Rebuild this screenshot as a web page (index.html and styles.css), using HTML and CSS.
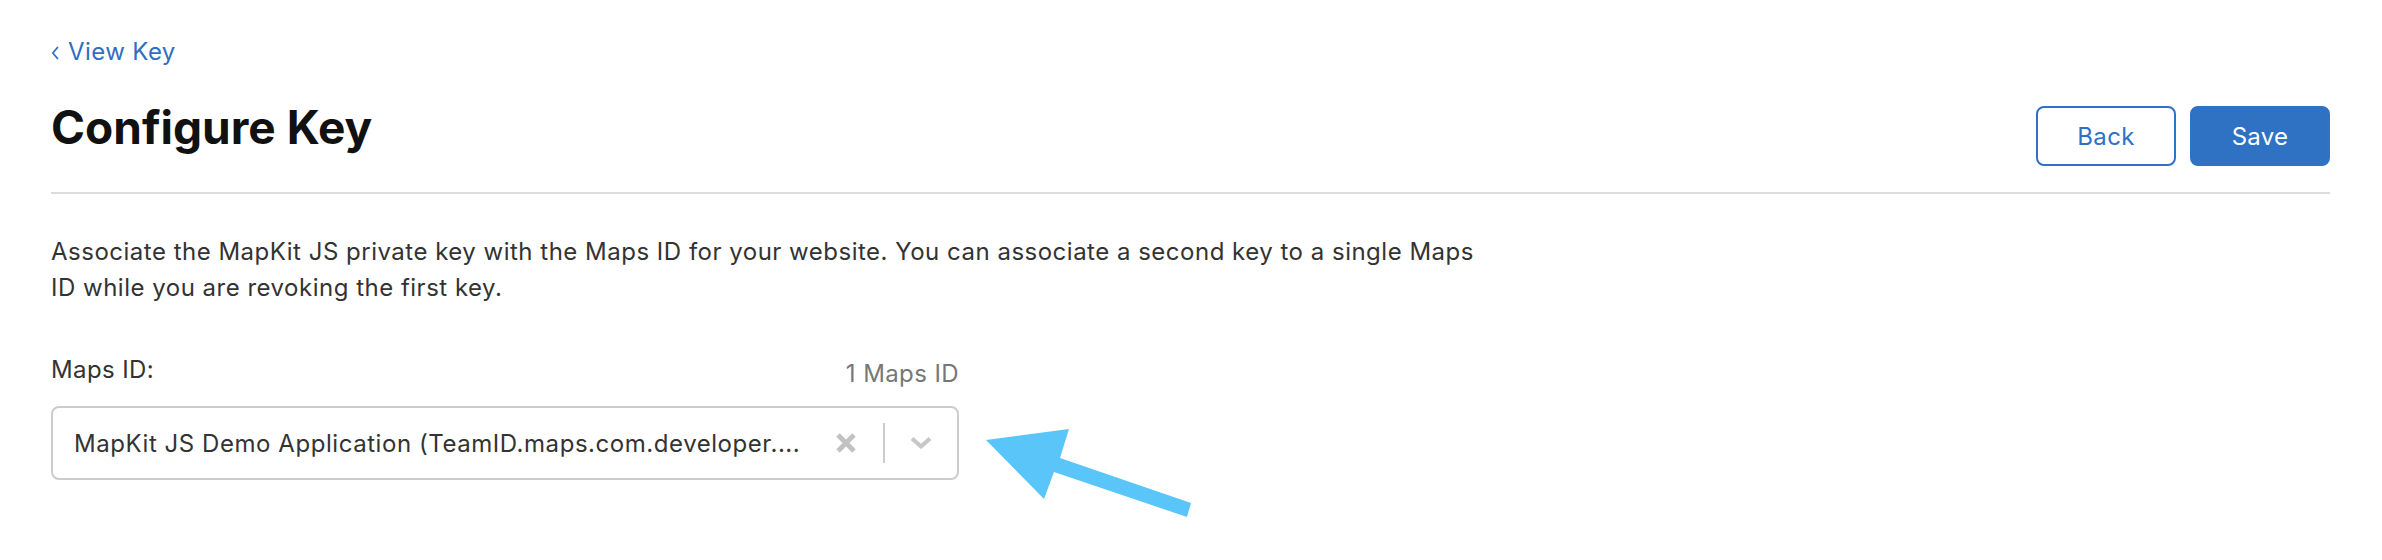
FILE: index.html
```html
<!DOCTYPE html>
<html lang="en">
<head>
<meta charset="utf-8">
<title>Configure Key</title>
<link rel="stylesheet" href="styles.css">
</head>
<body>
<div class="page">
  <a class="back-link" href="#"><svg class="back-chevron" width="8" height="14" viewBox="0 0 8 14"><polyline points="6.5,1.5 1.8,7 6.5,12.5" fill="none" stroke="currentColor" stroke-width="1.8" stroke-linecap="round" stroke-linejoin="round"/></svg>View Key</a>

  <header class="page-header">
    <h1 class="page-title">Configure Key</h1>
    <div class="actions">
      <button class="btn btn-outline">Back</button>
      <button class="btn btn-primary">Save</button>
    </div>
  </header>

  <p class="intro">Associate the MapKit JS private key with the Maps ID for your website. You can associate a second key to a single Maps ID while you are revoking the first key.</p>

  <div class="field">
    <div class="field-head">
      <label class="field-label">Maps ID:</label>
      <span class="field-count">1 Maps ID</span>
    </div>
    <div class="select">
      <span class="select-value">MapKit JS Demo Application (TeamID.maps.com.developer....</span>
      <span class="select-clear"><svg width="22" height="22" viewBox="0 0 22 22"><path d="M3 3 L19 19 M19 3 L3 19" stroke="#c2c2c2" stroke-width="4.8" stroke-linecap="butt"/></svg></span>
      <span class="select-sep"></span>
      <span class="select-toggle"><svg width="24" height="14" viewBox="0 0 24 14"><polyline points="3,2.5 12,10.5 21,2.5" fill="none" stroke="#c8c8c8" stroke-width="4.2" stroke-linejoin="round"/></svg></span>
    </div>
  </div>

  <svg class="annotation" width="220" height="110" viewBox="0 0 220 110">
    <polygon points="6,20 89,9 80,38 211,83 207,97 74,52 64,79" fill="#5ac5f8"/>
  </svg>
</div>
</body>
</html>
```

FILE: styles.css
```css
* { box-sizing: border-box; }

html, body {
  margin: 0;
  padding: 0;
  background: #ffffff;
}

body {
  font-family: "Inter", "Liberation Sans", sans-serif;
  color: #333333;
  letter-spacing: 0.4px;
}

.page {
  position: relative;
  padding: 36px 52px 0 51px;
  min-height: 560px;
}

.back-link {
  display: inline-flex;
  align-items: center;
  gap: 9px;
  font-size: 24px;
  line-height: 32px;
  color: #2f6fc2;
  text-decoration: none;
}

.back-chevron {
  margin-top: 2px;
}

.page-header {
  display: flex;
  justify-content: space-between;
  align-items: flex-start;
  margin-top: 28px;
  padding-bottom: 26px;
  border-bottom: 2px solid #dcdcdc;
}

.page-title {
  margin: 3px 0 0 0;
  font-size: 46px;
  line-height: 56px;
  font-weight: 700;
  color: #111111;
  letter-spacing: 0;
}

.actions {
  display: flex;
  gap: 14px;
  margin-top: 10px;
}

.btn {
  width: 140px;
  height: 60px;
  border-radius: 8px;
  font-family: inherit;
  font-size: 24px;
  letter-spacing: 0.3px;
  cursor: pointer;
}

.btn-outline {
  background: #ffffff;
  border: 2px solid #2f72c4;
  color: #2f72c4;
}

.btn-primary {
  background: #2f72c4;
  border: 2px solid #2f72c4;
  color: #ffffff;
}

.intro {
  margin: 40px 0 0 0;
  max-width: 1440px;
  font-size: 24px;
  line-height: 36px;
  letter-spacing: 0.5px;
  color: #333333;
}

.field {
  width: 908px;
  margin-top: 48px;
}

.field-head {
  display: flex;
  justify-content: space-between;
  align-items: flex-start;
  height: 32px;
}

.field-label {
  font-size: 24px;
  line-height: 32px;
  color: #333333;
}

.field-count {
  font-size: 24px;
  line-height: 32px;
  color: #777777;
  padding-top: 4px;
}

.select {
  display: flex;
  align-items: center;
  height: 74px;
  margin-top: 20px;
  border: 2px solid #cccccc;
  border-radius: 8px;
  padding-left: 21px;
}

.select-value {
  flex: 1;
  font-size: 24px;
  letter-spacing: 0.55px;
  color: #333333;
  white-space: nowrap;
}

.select-clear {
  display: flex;
  width: 22px;
  height: 22px;
  margin-right: 26px;
}

.select-sep {
  width: 2px;
  height: 40px;
  background: #cccccc;
}

.select-toggle {
  display: flex;
  width: 24px;
  height: 14px;
  margin: 0 24px 0 24px;
}

.annotation {
  position: absolute;
  left: 980px;
  top: 420px;
}
```
